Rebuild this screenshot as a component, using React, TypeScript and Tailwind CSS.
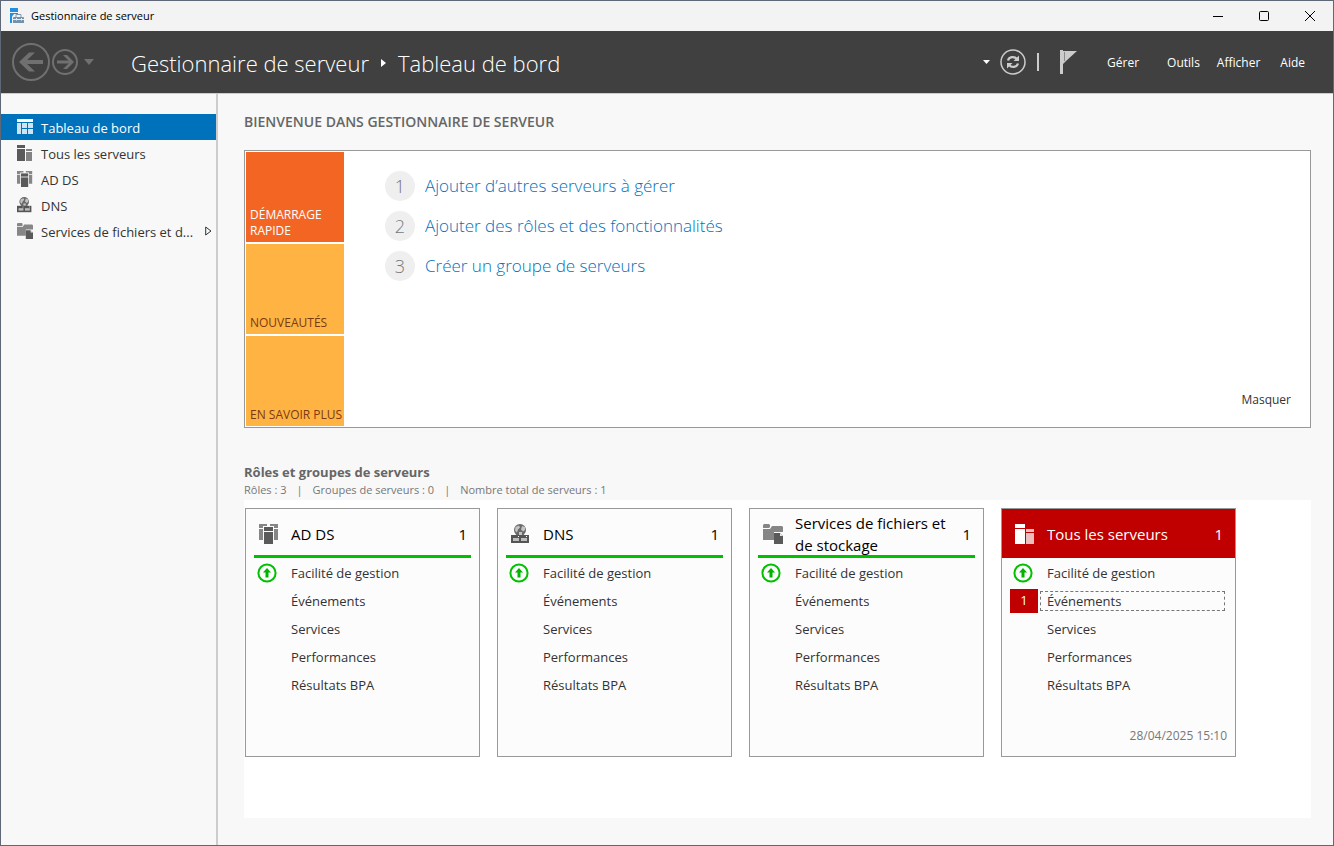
import React from "react";

type IconProps = { className?: string };

function AppIcon() {
  return (
    <svg width="16" height="16" viewBox="0 0 16 16" aria-hidden="true">
      <rect x="1" y="0" width="8" height="4" fill="#1f8fe0" />
      <rect x="1" y="5" width="8" height="10" fill="#1f8fe0" />
      <path d="M3 15V8.500L5 6h8l3 3v6z" fill="#f3f3f3" />
      <path d="M7 9V6.500h5V9" fill="none" stroke="#7d9bb5" />
      <path d="M4 9.500L5 9h9l1 0.500V15H4z" fill="#7592ad" />
      <path d="M4 11.500h3M8 11.500h4M13 11.500h2M7.500 10v2.500M12.500 10v2.500" stroke="#e4ecf3" />
    </svg>
  );
}

function DashboardIcon() {
  return (
    <svg width="16" height="16" viewBox="0 0 16 16" aria-hidden="true">
      <rect width="16" height="3" fill="#fff" />
      <g fill="#cfe4f3">
        <rect y="4" width="4" height="11" />
        <rect x="5" y="4" width="5" height="5" />
        <rect x="11" y="4" width="5" height="5" />
        <rect x="5" y="10" width="5" height="5" />
        <rect x="11" y="10" width="5" height="5" />
      </g>
    </svg>
  );
}

function ServersIcon({ className }: IconProps) {
  return (
    <svg className={className} viewBox="0 0 20 20" fill="currentColor" shapeRendering="crispEdges" aria-hidden="true">
      <rect width="10" height="4" />
      <rect y="5" width="10" height="15" />
      <g opacity="0.74">
        <rect x="11" y="5" width="8" height="3" />
        <rect x="11" y="9" width="8" height="11" />
      </g>
    </svg>
  );
}

function AddsIcon({ className }: IconProps) {
  return (
    <svg className={className} viewBox="0 0 20 20" aria-hidden="true">
      <g fill="#868686">
        <path d="M0 0h8v2H4v2H0zM11 0h8v4h-4V2h-4z" />
        <path d="M0 5h4v11H0zM15 5h4v11h-4z" />
      </g>
      <g fill="#5a5a5a">
        <rect x="5" y="3" width="9" height="4" />
        <rect x="5" y="8" width="9" height="12" />
      </g>
    </svg>
  );
}

function DnsIcon({ className }: IconProps) {
  return (
    <svg className={className} viewBox="0 0 20 20" aria-hidden="true">
      <circle cx="9" cy="6" r="6" fill="#6a6a6a" />
      <path d="M4.500 3L8 1.500l1 2-2 2-1 3-2-2zM11 2l3 1v3l-2 1.500-2-2zM8 8h3v3H8z" fill="#c4c4c4" />
      <rect y="11" width="18" height="8" fill="#555" />
      <rect x="2" y="14" width="6" height="3" fill="#bdbdbd" />
      <rect x="10" y="14" width="6" height="3" fill="#bdbdbd" />
      <rect x="7" y="12" width="1" height="1" fill="#fff" />
      <rect x="15" y="12" width="1" height="1" fill="#fff" />
    </svg>
  );
}

function FilesIcon({ className }: IconProps) {
  return (
    <svg className={className} viewBox="0 0 20 20" aria-hidden="true">
      <path d="M1 0h5l1 1v2L6 4H0V1zM0 5h7l2-3h10l1 1v5h-9v8H0z" fill="#868686" />
      <path d="M11 9h6l3 3v8h-9z" fill="#5a5a5a" />
      <path d="M17 9v3h3z" fill="#e8e8e8" />
    </svg>
  );
}

function UpIcon() {
  return (
    <svg width="20" height="20" viewBox="0 0 20 20" aria-hidden="true">
      <circle cx="10" cy="10" r="8.600" fill="none" stroke="#00c000" strokeWidth="2" />
      <path d="M10 5l4 4.400h-2.500V14.500h-3V9.400H6z" fill="#00b400" />
    </svg>
  );
}

const navItems = [
  { label: "Tableau de bord", icon: <DashboardIcon />, active: true },
  { label: "Tous les serveurs", icon: <ServersIcon className="size-4 text-[#5a5a5a]" /> },
  { label: "AD DS", icon: <AddsIcon className="size-4" /> },
  { label: "DNS", icon: <DnsIcon className="size-4" /> },
  { label: "Services de fichiers et d...", icon: <FilesIcon className="size-4" />, expandable: true },
];

const steps = [
  "Ajouter d’autres serveurs à gérer",
  "Ajouter des rôles et des fonctionnalités",
  "Créer un groupe de serveurs",
];

const cards = [
  { title: "AD DS", icon: <AddsIcon className="size-5" /> },
  { title: "DNS", icon: <DnsIcon className="size-5" /> },
  { title: "Services de fichiers et de stockage", icon: <FilesIcon className="size-5" /> },
  {
    title: "Tous les serveurs",
    icon: <ServersIcon className="size-5 text-white" />,
    alert: true,
    date: "28/04/2025 15:10",
  },
];

const rows = ["Facilité de gestion", "Événements", "Services", "Performances", "Résultats BPA"];

function TitleBar() {
  return (
    <div className="flex h-[30px] items-center bg-[#f3f3f3] pl-2">
      <AppIcon />
      <span className="ml-1.5 text-[11px] text-black">Gestionnaire de serveur</span>
      <div className="ml-auto flex h-full">
        <button aria-label="Réduire" className="flex w-[46px] items-center justify-center">
          <svg width="10" height="10" viewBox="0 0 10 10"><path d="M0 5.500h10" stroke="#000" /></svg>
        </button>
        <button aria-label="Agrandir" className="flex w-[46px] items-center justify-center">
          <svg width="10" height="10" viewBox="0 0 10 10"><rect x="0.500" y="0.500" width="9" height="9" rx="1" fill="none" stroke="#000" /></svg>
        </button>
        <button aria-label="Fermer" className="flex w-[46px] items-center justify-center">
          <svg width="10" height="10" viewBox="0 0 10 10"><path d="M0 0l10 10M10 0L0 10" stroke="#000" /></svg>
        </button>
      </div>
    </div>
  );
}

function Header() {
  return (
    <header className="flex h-[63px] items-center border-b border-[#cccccc] bg-[#404040] pl-[11px] text-white">
      <button aria-label="Précédent">
        <svg width="38" height="38" viewBox="0 0 38 38" fill="none" stroke="#707070">
          <circle cx="19" cy="19" r="18" strokeWidth="2" />
          <path d="M31 19H10" strokeWidth="4" />
          <path d="M23 9.500h-6L7 19l10 9.500h6L13 19z" fill="#707070" stroke="none" />
        </svg>
      </button>
      <button aria-label="Suivant" className="ml-0.5">
        <svg width="26" height="26" viewBox="0 0 26 26" fill="none" stroke="#707070">
          <circle cx="13" cy="13" r="12" strokeWidth="2" />
          <path d="M5 13h13" strokeWidth="3" />
          <path d="M11 6h4l7 7-7 7h-4l7-7z" fill="#707070" stroke="none" />
        </svg>
      </button>
      <button aria-label="Historique" className="ml-1.5">
        <svg width="10" height="6" viewBox="0 0 10 6"><path d="M0 0h10L5 6z" fill="#707070" /></svg>
      </button>
      <h1 className="ml-[37px] flex items-center whitespace-nowrap pt-0.5 text-[22px] font-light">
        <span>Gestionnaire de serveur</span>
        <svg className="mx-3" width="5" height="8" viewBox="0 0 5 8"><path d="M0 0l5 4-5 4z" fill="#fff" /></svg>
        <span>Tableau de bord</span>
      </h1>
      <div className="ml-auto flex items-center">
        <button aria-label="Options">
          <svg width="7" height="4" viewBox="0 0 7 4"><path d="M0 0h7L3.500 4z" fill="#fff" /></svg>
        </button>
        <button aria-label="Actualiser" className="ml-2.5">
          <svg width="26" height="26" viewBox="0 0 26 26" fill="none" stroke="#cccccc">
            <circle cx="13" cy="13" r="12" strokeWidth="1.500" />
            <path d="M8 11.500c1-4 6.500-4.500 9-1.500M18 14.500c-1 4-6.500 4.500-9 1.500" strokeWidth="2.200" />
            <path d="M19 6.500v5.500h-5.500zM7 19.500V14h5.500z" fill="#cccccc" stroke="none" />
          </svg>
        </button>
        <span className="ml-[11px] h-[18px] w-0.5 bg-[#cccccc]" />
        <button aria-label="Notifications" className="ml-[21px]">
          <svg width="17" height="28" viewBox="0 0 17 28">
            <rect y="2" width="3" height="24" fill="#cccccc" />
            <path d="M3 3h14L6 13l-3 3z" fill="#cccccc" />
            <path d="M4.500 4v9" stroke="#8a8a8a" />
          </svg>
        </button>
        <nav className="ml-[30px] flex pr-7 pt-0.5 text-[12px]">
          <button className="mr-7">Gérer</button>
          <button className="mr-[17px]">Outils</button>
          <button className="mr-5">Afficher</button>
          <button>Aide</button>
        </nav>
      </div>
    </header>
  );
}

function Sidebar() {
  return (
    <nav className="w-[217px] shrink-0 border-r-2 border-[#cccccc] pt-5 text-[13px] text-[#333333]">
      {navItems.map((item) => (
        <a
          key={item.label}
          href="#"
          className={`flex h-[26px] items-center gap-2 whitespace-nowrap pl-4 pr-1 ${
            item.active ? "bg-[#0072bc] text-white" : ""
          }`}
        >
          {item.icon}
          <span className="pt-[3px]">{item.label}</span>
          {item.expandable && (
            <svg className="ml-auto" width="7" height="10" viewBox="0 0 7 10">
              <path d="M0.700 1v8L6 5z" fill="none" stroke="#333" />
            </svg>
          )}
        </a>
      ))}
    </nav>
  );
}

function WelcomePanel() {
  return (
    <section className="flex min-h-[278px] border border-[#999999] bg-white p-px">
      <div className="flex w-[98px] shrink-0 flex-col gap-0.5 text-[12px] leading-4">
        <button className="flex h-[90px] items-end bg-[#f36523] px-1 pb-[3px] text-left text-white">
          DÉMARRAGE RAPIDE
        </button>
        <button className="flex h-[90px] items-end whitespace-nowrap bg-[#ffb343] px-1 pb-[3px] text-[#7b3a12]">
          NOUVEAUTÉS
        </button>
        <button className="flex h-[90px] items-end whitespace-nowrap bg-[#ffb343] px-1 pb-[3px] text-[#7b3a12]">
          EN SAVOIR PLUS
        </button>
      </div>
      <ol className="flex flex-1 flex-col gap-2.5 pl-[41px] pt-[19px]">
        {steps.map((step, i) => (
          <li key={step} className="flex h-[30px] items-center gap-2.5 text-[17px] font-light">
            <span className="flex size-[30px] items-center justify-center rounded-full bg-[#efefef] text-[18px] text-[#777777]">
              {i + 1}
            </span>
            <a href="#" className="text-[#0072bc]">{step}</a>
          </li>
        ))}
      </ol>
      <button className="mb-[17px] mr-[18px] self-end text-[12px] text-[#333333]">Masquer</button>
    </section>
  );
}

function Card({ card }: { card: (typeof cards)[number] }) {
  return (
    <article className="flex min-h-[249px] w-[235px] flex-col border border-[#999999] bg-[#fcfcfc]">
      <div className={card.alert ? "bg-[#c00000] px-2 text-white" : "px-2 text-black"}>
        <div
          className={`flex h-[49px] items-center border-b-3 pl-[5px] pr-1 pt-[3px] text-[15px] leading-[22px] ${
            card.alert ? "border-[#c00000]" : "border-[#00c000]"
          }`}
        >
          {card.icon}
          <h3 className="ml-3 flex-1">{card.title}</h3>
          <span>1</span>
        </div>
      </div>
      <ul className="px-2 pt-px text-[13px] text-[#333333]">
        {rows.map((row, i) => {
          const flagged = card.alert && i === 1;
          return (
            <li key={row} className="flex h-7 items-center">
              <span className={`flex w-7 shrink-0 ${flagged ? "" : "pl-[3px]"}`}>
                {i === 0 && <UpIcon />}
                {flagged && (
                  <span className="flex h-6 w-7 items-center justify-center bg-[#c00000] text-[13px] text-white">1</span>
                )}
              </span>
              <a
                href="#"
                className={`mx-0.5 flex-1 border border-dashed pl-1.5 leading-[18px] ${
                  flagged ? "border-[#777777]" : "border-transparent"
                }`}
              >
                {row}
              </a>
            </li>
          );
        })}
      </ul>
      {card.date && <p className="mt-auto pb-3 pr-2 text-right text-[12px] leading-4 text-[#777777]">{card.date}</p>}
    </article>
  );
}

export default function App() {
  return (
    <div className="flex min-h-screen flex-col border border-[#5f6878] bg-[#f8f8f8] font-['Open_Sans','Noto_Sans',sans-serif]">
      <TitleBar />
      <Header />
      <div className="flex flex-1">
        <Sidebar />
        <main className="flex min-w-0 flex-1 flex-col pb-[27px] pl-[26px] pr-[22px] pt-[18px]">
          <h2 className="text-[14px] font-semibold leading-5 text-[#666666]">BIENVENUE DANS GESTIONNAIRE DE SERVEUR</h2>
          <div className="mt-[18px]">
            <WelcomePanel />
          </div>
          <h2 className="mt-[34px] text-[13px] font-bold leading-5 text-[#666666]">Rôles et groupes de serveurs</h2>
          <p className="flex gap-2.5 text-[11px] leading-4 text-[#777777]">
            <span>Rôles : 3</span>
            <span>|</span>
            <span>Groupes de serveurs : 0</span>
            <span>|</span>
            <span>Nombre total de serveurs : 1</span>
          </p>
          <section className="mt-0.5 flex flex-1 flex-wrap content-start gap-[17px] bg-white px-px pt-2">
            {cards.map((card) => (
              <Card key={card.title} card={card} />
            ))}
          </section>
        </main>
      </div>
    </div>
  );
}
